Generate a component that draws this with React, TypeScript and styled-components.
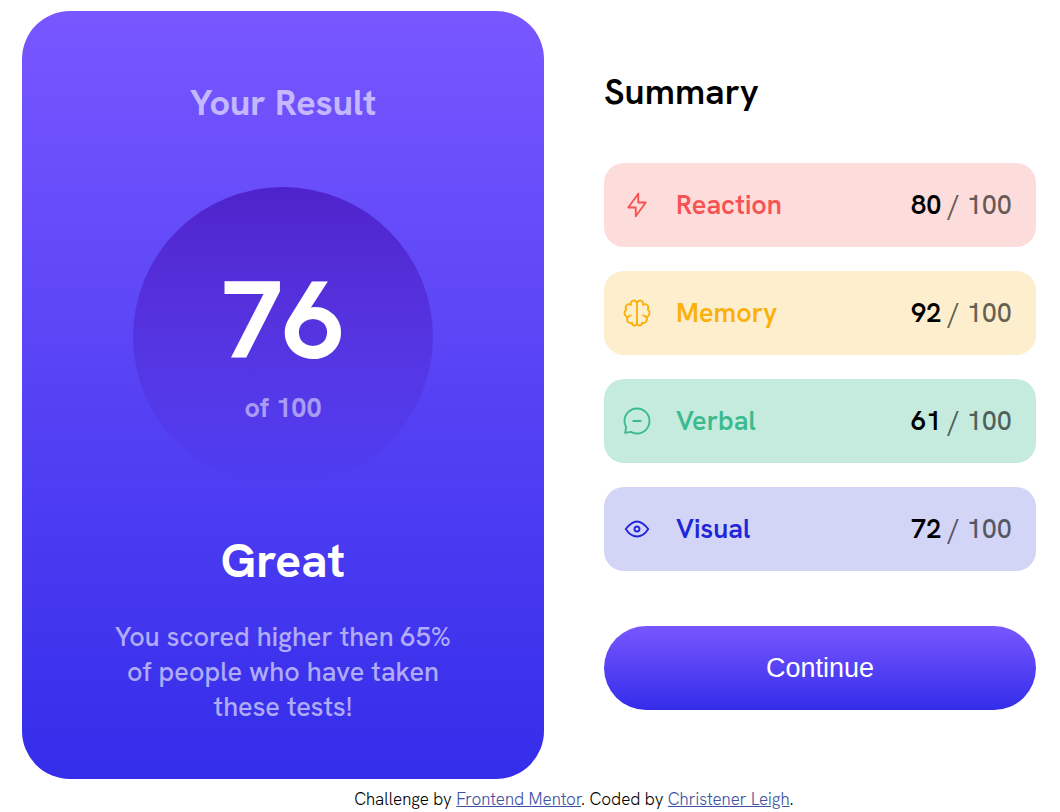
import React from 'react';
import styled, { createGlobalStyle } from 'styled-components';

const GlobalStyle = createGlobalStyle`
  *, *::before, *::after { box-sizing: border-box; }
  body {
    margin: 0;
    background: #fff;
    color: #000;
    font-family: 'Hanken Grotesk', Inter, 'Liberation Sans', sans-serif;
    font-size: 27px;
    font-weight: 500;
  }
  h1, h2, p, ul { margin: 0; padding: 0; }
`;

const Page = styled.main`
  display: grid;
  grid-template-columns: 29fr 24fr;
  gap: 60px;
  padding: 11px 24px 0 22px;
`;

const ResultCard = styled.section`
  display: flex;
  flex-direction: column;
  align-items: center;
  padding: 68px 80px 55px;
  border-radius: 48px;
  background: linear-gradient(#7857ff, #342dea);
  color: #fff;
  text-align: center;
`;

const ResultTitle = styled.h1`
  font-size: 36px;
  line-height: 48px;
  font-weight: 700;
  color: rgba(255, 255, 255, 0.6);
`;

const ScoreCircle = styled.div`
  display: flex;
  flex-direction: column;
  align-items: center;
  width: 300px;
  height: 300px;
  margin-top: 60px;
  padding-top: 70px;
  border-radius: 50%;
  background: linear-gradient(#4e23cb, rgba(37, 33, 201, 0));
`;

const Score = styled.span`
  font-size: 110px;
  line-height: 126px;
  font-weight: 700;
`;

const ScoreTotal = styled.span`
  line-height: 50px;
  font-weight: 700;
  color: rgba(255, 255, 255, 0.5);
`;

const Verdict = styled.h2`
  margin-top: 44px;
  font-size: 48px;
  line-height: 60px;
  font-weight: 700;
`;

const Comparison = styled.p`
  max-width: 350px;
  margin-top: 28px;
  line-height: 35px;
  color: rgba(255, 255, 255, 0.6);
`;

const Summary = styled.section`
  display: flex;
  flex-direction: column;
  padding-top: 57px;
`;

const SummaryTitle = styled.h2`
  font-size: 36px;
  line-height: 48px;
  font-weight: 600;
`;

const ScoreList = styled.ul`
  display: flex;
  flex-direction: column;
  gap: 24px;
  margin-top: 47px;
  list-style: none;
`;

const ScoreRow = styled.li<{ $tint: string; $color: string }>`
  display: flex;
  align-items: center;
  height: 84px;
  padding: 0 24px 0 18px;
  border-radius: 20px;
  line-height: 34px;
  background: ${({ $tint }) => $tint};
  color: ${({ $color }) => $color};
`;

const Icon = styled.svg`
  width: 30px;
  height: 30px;
  margin-right: 24px;
  fill: none;
  stroke: currentColor;
  stroke-width: 1.25;
  stroke-linecap: round;
  stroke-linejoin: round;
`;

const Category = styled.span`
  flex: 1;
  font-weight: 600;
`;

const Points = styled.span`
  font-weight: 600;
  color: #000;
`;

const OutOf = styled.span`
  font-weight: 500;
  color: rgba(0, 0, 0, 0.6);
`;

const ContinueButton = styled.button`
  height: 84px;
  margin-top: 55px;
  border: 0;
  border-radius: 42px;
  background: linear-gradient(#7857ff, #342dea);
  color: #fff;
  font: 400 27px 'Liberation Sans', Arial, sans-serif;
  cursor: pointer;
`;

const Footer = styled.footer`
  padding: 10px 0 3px 88px;
  font-size: 17px;
  line-height: 20px;
  font-weight: 300;
  text-align: center;
`;

const Link = styled.a`
  color: #3e52a3;
`;

const scores = [
  {
    name: 'Reaction', points: 80, color: '#f75353', tint: '#fcdddb',
    icon: <path d="M10.833 8.333V2.5l-6.666 9.167h5V17.5l6.666-9.167h-5Z" />,
  },
  {
    name: 'Memory', points: 92, color: '#fbb00b', tint: '#fdefcd',
    icon: (
      <>
        <path d="M5.833 11.667a2.5 2.5 0 1 0 .834 4.858" />
        <path d="M3.553 13.004a3.333 3.333 0 0 1-.728-5.53m.025-.067a2.083 2.083 0 0 1 2.983-2.824m.199.054A2.083 2.083 0 1 1 10 3.75v12.917a1.667 1.667 0 0 1-3.333 0" />
        <path d="M14.167 11.667a2.5 2.5 0 1 1-.834 4.858" />
        <path d="M16.447 13.004a3.334 3.334 0 0 0 .728-5.53m-.025-.067a2.083 2.083 0 0 0-2.983-2.824M10 3.75a2.083 2.083 0 1 1 3.967.887M13.333 16.667a1.667 1.667 0 0 1-3.333 0" />
      </>
    ),
  },
  {
    name: 'Verbal', points: 61, color: '#3cba8f', tint: '#c5ebdf',
    icon: (
      <>
        <path d="M10 18.333A8.333 8.333 0 1 0 1.667 10c0 1.518.406 2.942 1.115 4.167l-.699 3.75 3.75-.699A8.295 8.295 0 0 0 10 18.333Z" />
        <path d="M12.5 10h-5" />
      </>
    ),
  },
  {
    name: 'Visual', points: 72, color: '#2125d9', tint: '#d3d5f7',
    icon: (
      <>
        <path d="M10 11.667a1.667 1.667 0 1 0 0-3.334 1.667 1.667 0 0 0 0 3.334Z" />
        <path d="M17.5 10c-1.574 2.492-4.402 5-7.5 5s-5.926-2.508-7.5-5C4.416 7.632 6.66 5 10 5s5.584 2.632 7.5 5Z" />
      </>
    ),
  },
];

export default function App() {
  return (
    <>
      <GlobalStyle />
      <Page>
        <ResultCard>
          <ResultTitle>Your Result</ResultTitle>
          <ScoreCircle>
            <Score>76</Score>
            <ScoreTotal>of 100</ScoreTotal>
          </ScoreCircle>
          <Verdict>Great</Verdict>
          <Comparison>You scored higher then 65% of people who have taken these tests!</Comparison>
        </ResultCard>
        <Summary>
          <SummaryTitle>Summary</SummaryTitle>
          <ScoreList>
            {scores.map(({ name, points, color, tint, icon }) => (
              <ScoreRow key={name} $tint={tint} $color={color}>
                <Icon viewBox="0 0 20 20" aria-hidden="true">{icon}</Icon>
                <Category>{name}</Category>
                <Points>
                  {points} <OutOf>/ 100</OutOf>
                </Points>
              </ScoreRow>
            ))}
          </ScoreList>
          <ContinueButton type="button">Continue</ContinueButton>
        </Summary>
      </Page>
      <Footer>
        Challenge by <Link href="https://www.frontendmentor.io">Frontend Mentor</Link>. Coded by{' '}
        <Link href="#">Christener Leigh</Link>.
      </Footer>
    </>
  );
}
